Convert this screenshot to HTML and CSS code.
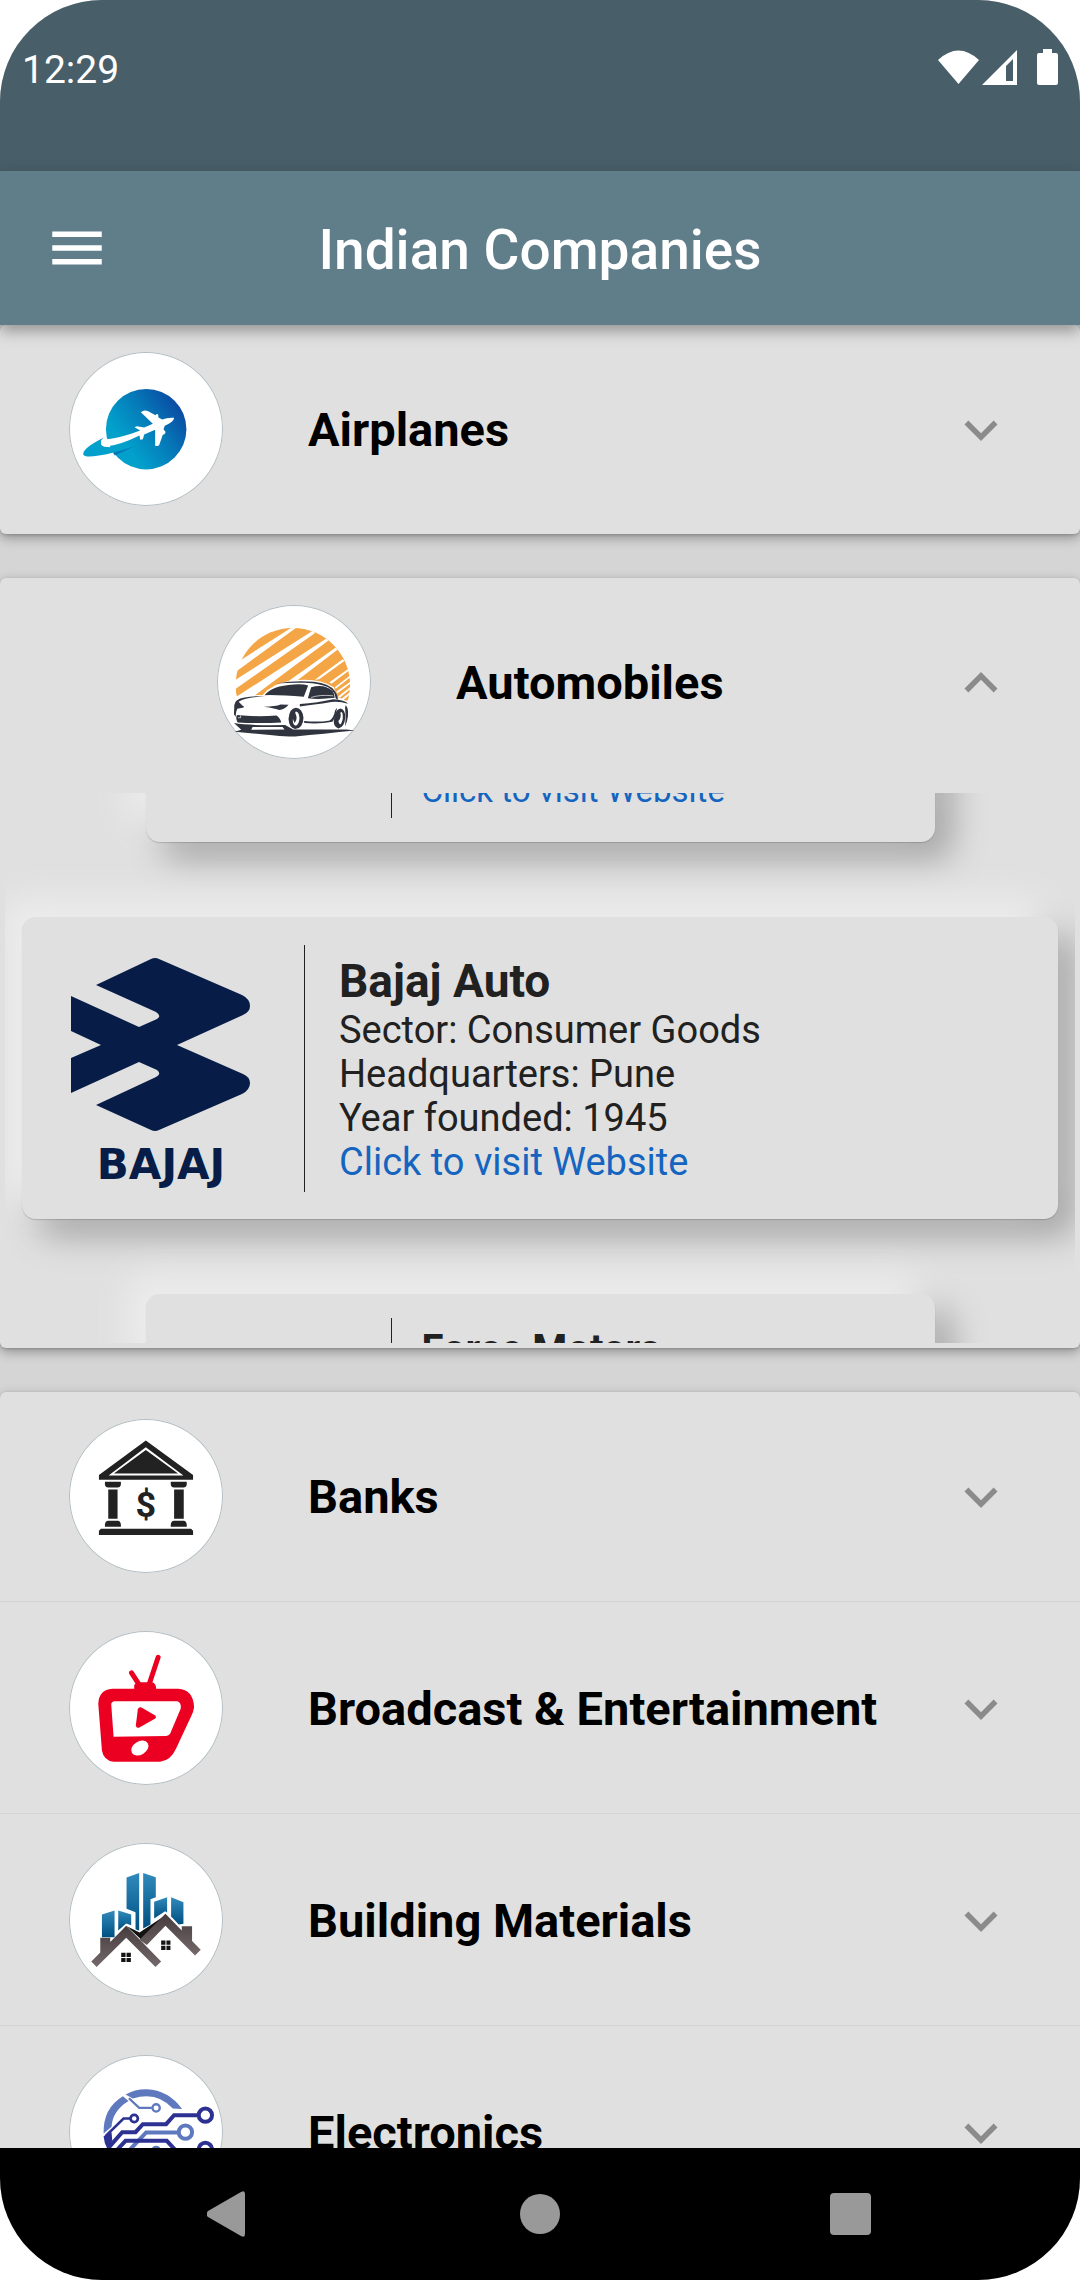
FILE: index.html
```html
<!DOCTYPE html>
<html lang="en">
<head>
<meta charset="utf-8">
<meta name="viewport" content="width=device-width, initial-scale=1">
<title>Indian Companies</title>
<link rel="stylesheet" href="styles.css">
</head>
<body>
<svg class="defs" aria-hidden="true">
  <symbol id="chevron-down" viewBox="0 0 24 24"><path fill="currentColor" d="M16.59 8.59L12 13.17 7.41 8.59 6 10l6 6 6-6z"/></symbol>
  <symbol id="chevron-up" viewBox="0 0 24 24"><path fill="currentColor" d="M12 8l-6 6 1.41 1.41L12 10.83l4.59 4.58L18 14z"/></symbol>
</svg>
<div class="phone">
  <div class="status-bar">
    <span class="clock">12:29</span>
    <svg class="status-icons" viewBox="0 0 120 36" aria-hidden="true">
      <path fill="#fff" d="M0 11Q20.500 -8 41 11L20.500 35Z"/>
      <path fill="#fff" fill-rule="evenodd" d="M44 36L79 1V36ZM68 32H75V10L68 17Z"/>
      <path fill="#fff" d="M105 0H114V4H118Q120 4 120 6V34Q120 36 118 36H101Q99 36 99 34V6Q99 4 101 4H105Z"/>
    </svg>
  </div>

  <header class="app-bar">
    <button class="menu" type="button" aria-label="Open menu">
      <svg viewBox="0 0 24 24"><path fill="#fff" d="M3 18h18v-2H3v2zm0-5h18v-2H3v2zm0-7v2h18V6H3z"/></svg>
    </button>
    <h1>Indian Companies</h1>
  </header>

  <main class="content">
    <section class="panel">
      <button class="row" type="button" aria-expanded="false">
        <svg class="avatar" viewBox="86 66 463 463" aria-hidden="true">
          <defs><linearGradient id="sky" x1="0.250" y1="0.700" x2="0.950" y2="0.200"><stop offset="0" stop-color="#02a0cb"/><stop offset="0.500" stop-color="#0579b8"/><stop offset="1" stop-color="#0b47a1"/></linearGradient></defs>
          <circle cx="318" cy="298" r="121" fill="url(#sky)"/>
          <path fill="#fff" d="M190 324Q178 340 186 350L150 382L215 372Q260 360 300 344L200 380L160 400L120 380Z"/>
          <path fill="#02a0cb" d="M196 321Q124 356 129 375Q136 388 218 369Q262 358 290 345L225 352Q180 354 182 338Q184 326 196 321Z"/>
          <path fill="#0579b8" d="M218 369Q262 358 290 345Q255 364 224 377Z"/>
          <path fill="#fff" d="M184 330Q240 326 300 302L283 292L290 289L312 293L338 282L302 247Q312 238 324 244L346 256Q350 250 354 254L355 263L366 269Q384 262 402 264Q402 276 374 288L370 298L376 306Q376 314 368 315L357 346Q350 350 345 348L345 300L312 314L308 328L300 330L298 317Q240 346 194 351Q176 348 184 330Z"/>
        </svg>
        <span class="label">Airplanes</span>
        <svg class="chevron"><use href="#chevron-down"/></svg>
      </button>
    </section>

    <section class="panel">
      <button class="row row-open" type="button" aria-expanded="true">
        <svg class="avatar" viewBox="81 75 463 463" aria-hidden="true">
          <defs><clipPath id="sun"><rect x="130" y="140" width="360" height="222"/></clipPath></defs>
          <g clip-path="url(#sun)">
            <circle cx="309" cy="316" r="172" fill="#f4a545"/>
            <path fill="#fff" d="M120 265L158 237L302 145L318 144L144 271L120 290ZM130 304L368 153L376 159L130 332ZM130 357L410 176L416 182L195 346L170 364H130ZM290 308L438 203L444 209L325 300ZM375 300L459 238L464 243L388 298ZM418 308L474 268L478 272L426 311ZM435 322L482 286V292L438 327ZM440 335L484 304V310L442 341ZM445 350L484 320V326L450 354ZM452 360L484 334V340L458 364Z"/>
          </g>
          <path fill="#fff" d="M132 362Q160 344 218 346Q246 310 305 302Q385 292 432 322L444 352Q470 358 474 376V420L460 452H150L134 420Z"/>
          <g fill="#30343f">
            <path d="M224 346Q246 318 312 314Q340 312 355 317L342 351Q275 345 224 346Z"/>
            <path d="M364 322Q404 312 428 333Q434 342 435 354Q385 360 354 355Z"/>
            <path d="M258 311Q320 300 372 306Q420 312 436 334Q446 350 444 360L438 356Q434 324 398 316Q360 308 340 309Q300 308 258 311Z"/>
            <path d="M133 376Q134 358 164 353Q190 347 226 350Q170 352 146 366L158 378Q166 382 158 384L142 387Q136 400 138 412L132 404Z"/>
            <path d="M222 381Q258 380 272 374L296 375Q284 390 268 391Q258 386 222 381Z"/>
            <path d="M141 406Q205 412 260 407Q272 416 274 428Q210 432 143 428Q136 416 141 406Z"/>
            <path d="M330 373Q385 368 430 358Q466 360 475 372Q448 364 425 367Q370 376 330 380Z"/>
            <path fill-rule="evenodd" d="M296 418Q298 386 318 384Q338 386 341 414Q340 446 316 448Q298 446 296 418ZM309 417Q308 436 318 438Q328 434 329 415Q328 396 318 395Q314 398 318 404Q324 418 314 430Z"/>
            <path fill-rule="evenodd" d="M432 424Q434 390 452 386Q466 388 467 412Q464 444 446 446Q432 442 432 424ZM446 424Q448 438 454 432Q462 418 458 400Q454 394 452 400Q456 414 446 424Z"/>
            <path d="M468 376Q480 390 472 424L466 440Q470 410 466 384ZM342 424Q390 428 420 422Q432 414 436 392L442 384Q438 412 428 426Q390 434 344 430Z"/>
            <path d="M132 430Q180 438 286 436L310 449H430L470 449L496 452Q400 462 316 470Q280 472 240 466L134 456L154 450Z"/>
          </g>
          <path fill="#fff" d="M188 442H278L284 449L184 450ZM342 438Q390 436 424 438L432 444H338Z"/>
          <path stroke="#fff" stroke-width="2" d="M144 414H152V407M364 353Q390 344 430 348" fill="none"/>
        </svg>
        <span class="label">Automobiles</span>
        <svg class="chevron"><use href="#chevron-up"/></svg>
      </button>

      <div class="wheel">
        <article class="company company-far company-prev">
          <div class="details"><a href="#website">Click to visit Website</a></div>
        </article>
        <article class="company">
          <svg class="logo" viewBox="0 0 179 221" role="img" aria-label="Bajaj">
            <path fill="#071d48" d="M80 1Q84 -1 88 1L171 37Q179 41 179 48Q179 54 172 57L106 87L172 116Q179 119 179 125Q179 132 171 136L88 172Q84 174 80 172L25 147L85 119Q91 116 86 112L68 104L0 135V100L30 87L0 73V38L68 69L86 61Q91 58 85 54L25 27Z"/>
            <text x="90" y="221" text-anchor="middle">BAJAJ</text>
          </svg>
          <div class="details">
            <h2>Bajaj Auto</h2>
            <p>Sector: Consumer Goods</p>
            <p>Headquarters: Pune</p>
            <p>Year founded: 1945</p>
            <a href="#website">Click to visit Website</a>
          </div>
        </article>
        <article class="company company-far company-next">
          <div class="details"><h2>Force Motors</h2></div>
        </article>
      </div>
    </section>

    <section class="panel">
      <button class="row" type="button" aria-expanded="false">
        <svg class="avatar" viewBox="86 87 463 463" aria-hidden="true">
          <g fill="#222">
            <path fill-rule="evenodd" d="M317 152L459 255V270H176V255ZM317 172L205 257H430Z"/>
            <path d="M317 180L414 251H221Z"/>
            <path d="M194 276H242V284Q241 293 232 293H204Q195 293 194 284ZM204 299H232V387H204ZM204 393H232Q241 394 242 404V411H194V404Q195 394 204 393Z"/>
            <path d="M392 276H440V284Q439 293 430 293H402Q393 293 392 284ZM402 299H431V387H402ZM402 393H430Q439 394 440 404V411H392V404Q393 394 402 393Z"/>
            <path d="M182 417H453L459 423V436H176V423Z"/>
          </g>
          <text class="dollar" x="317" y="383" text-anchor="middle">$</text>
        </svg>
        <span class="label">Banks</span>
        <svg class="chevron"><use href="#chevron-down"/></svg>
      </button>
      <button class="row" type="button" aria-expanded="false">
        <svg class="avatar" viewBox="86 93 463 463" aria-hidden="true">
          <g fill="#eb0022">
            <path fill-rule="evenodd" d="M216 267H282V256Q286 248 298 247H336Q348 250 348 267H414Q460 270 462 322Q460 336 454 348L408 446Q392 482 360 486H220Q190 482 185 452L174 312Q176 270 216 267ZM222 304Q213 306 213 314L220 411L378 409Q386 408 390 402L422 326Q424 308 412 304Z"/>
            <path d="M293 328Q296 320 304 323L344 346Q351 352 344 357L299 382Q288 387 287 376Z"/>
          </g>
          <path d="M274 219L294 250M354 172L328 250" stroke="#eb0022" stroke-width="15" stroke-linecap="round"/>
          <ellipse cx="299" cy="445" rx="28" ry="20" transform="rotate(-32 299 445)" fill="#fff"/>
        </svg>
        <span class="label">Broadcast &amp; Entertainment</span>
        <svg class="chevron"><use href="#chevron-down"/></svg>
      </button>
      <button class="row" type="button" aria-expanded="false">
        <svg class="avatar" viewBox="86 83 463 463" aria-hidden="true">
          <defs>
            <linearGradient id="tower" x1="0" y1="0" x2="0" y2="1"><stop offset="0" stop-color="#318abb"/><stop offset="1" stop-color="#004f82"/></linearGradient>
            <linearGradient id="roof" x1="0" y1="0" x2="0" y2="1"><stop offset="0" stop-color="#463b3c"/><stop offset="1" stop-color="#756a6b"/></linearGradient>
          </defs>
          <g fill="url(#tower)">
            <path d="M259 187L297 173V347L286 342V291L259 281Z"/>
            <path d="M309 173L347 186V246L331 252V328L309 340Z"/>
            <path d="M342 260L381 246V292L375 288L342 310Z"/>
            <path d="M393 246L430 261V326L416 328L393 304Z"/>
            <path d="M185 298L223 286V366H185Z"/>
            <path d="M234 286L273 298V330L258 325L234 346Z"/>
          </g>
          <path fill="#131313" d="M260 333L298 352L376 300L310 380Z"/>
          <g fill="url(#roof)">
            <path d="M153 439L180 412V368H210V381L258 332L363 439L346 456L258 368L169 456Z"/>
            <path d="M298 374L376 296L425 346V333H456V378L482 404L465 421L376 332L320 390Z"/>
          </g>
          <path fill="#131313" d="M243 413H256V426H243ZM259 413H272V426H259ZM243 429H256V441H243ZM259 429H272V441H259ZM363 376H376V389H363ZM379 376H391V389H379ZM363 392H376V405H363ZM379 392H391V405H379Z"/>
        </svg>
        <span class="label">Building Materials</span>
        <svg class="chevron"><use href="#chevron-down"/></svg>
      </button>
      <button class="row" type="button" aria-expanded="false">
        <svg class="avatar" viewBox="86 102 463 463" aria-hidden="true">
          <g fill="#5f79bf">
            <path d="M256 221Q286 204 320 205Q385 208 426 264L398 263Q350 210 278 233Z"/>
            <path d="M248 226L265 240Q216 270 214 318L190 338Q188 262 248 226Z"/>
          </g>
          <g fill="none" stroke="#5f79bf" stroke-width="7">
            <path d="M266 232L297 261H335"/><circle cx="348" cy="261" r="11"/>
            <path stroke-width="12" d="M262 394L318 335H412"/><circle cx="436" cy="334" r="20" stroke-width="12"/>
            <circle cx="348" cy="389" r="11"/>
          </g>
          <g fill="none" stroke="#2c3192" stroke-width="8">
            <path d="M196 346L250 293H270"/><circle cx="282" cy="293" r="11"/>
            <path stroke-width="12" d="M204 382L246 334H286L308 310H378L402 283H472"/><circle cx="496" cy="283" r="20" stroke-width="12"/>
            <path stroke-width="12" d="M230 388L256 360H380L406 388H472"/><circle cx="496" cy="386" r="20" stroke-width="12"/>
          </g>
          <path fill="#2c3192" d="M190 346L214 334L216 358L204 388Q192 370 190 346Z"/>
        </svg>
        <span class="label">Electronics</span>
        <svg class="chevron"><use href="#chevron-down"/></svg>
      </button>
    </section>
  </main>

  <nav class="nav-bar" aria-label="System">
    <button type="button" aria-label="Back"><svg viewBox="0 0 44 46"><path fill="#999" d="M1 20L34 1Q38 -1 38 3V43Q38 47 34 45L1 26Q-2 23 1 20Z"/></svg></button>
    <button type="button" aria-label="Home"><svg viewBox="0 0 44 46"><circle cx="22" cy="23" r="20" fill="#999"/></svg></button>
    <button type="button" aria-label="Recent apps"><svg viewBox="0 0 44 46"><rect x="1" y="2" width="41" height="42" rx="4" fill="#999"/></svg></button>
  </nav>
</div>
</body>
</html>
```
FILE: styles.css
```css
* { box-sizing: border-box; }

body {
  margin: 0;
  background: #fff;
  font-family: Roboto, "Noto Sans", sans-serif;
  color: #212121;
}

h1, h2, p { margin: 0; }

button {
  border: 0;
  padding: 0;
  background: none;
  font: inherit;
  color: inherit;
}

a { color: #1565c0; text-decoration: none; }

.defs { display: none; }

.phone {
  display: flex;
  flex-direction: column;
  height: 100vh;
  overflow: hidden;
  border-radius: 102px;
  background: #d5d5d5;
}

.status-bar {
  display: flex;
  flex: none;
  justify-content: space-between;
  align-items: flex-start;
  height: 171px;
  padding: 47px 22px 0;
  background: #485e68;
  color: #fff;
}

.clock { font-size: 39px; line-height: 46px; }

.status-icons { width: 120px; height: 36px; margin-top: 2px; }

.app-bar {
  position: relative;
  z-index: 1;
  display: grid;
  grid-template-columns: 66px 1fr 66px;
  flex: none;
  align-items: center;
  height: 154px;
  padding: 0 44px;
  background: #607d8a;
  color: #fff;
  box-shadow: 0 6px 14px rgba(0, 0, 0, 0.34);
}

.menu { height: 66px; }
.menu svg { display: block; width: 66px; height: 66px; }

.app-bar h1 {
  padding-top: 4px;
  font-size: 55px;
  font-weight: 500;
  line-height: 64px;
  text-align: center;
}

.content {
  display: flex;
  flex: 1;
  flex-direction: column;
  gap: 44px;
  min-height: 0;
  overflow: hidden;
}

.panel {
  flex: none;
  border-radius: 6px;
  background: #e0e0e0;
  box-shadow: 0 4px 12px rgba(0, 0, 0, 0.32), 0 1px 3px rgba(0, 0, 0, 0.16);
}

.row {
  display: flex;
  align-items: center;
  width: 100%;
  padding: 27px 66px 28px 69px;
  text-align: left;
}

.row + .row {
  border-top: 1px solid #d4d4d4;
  padding-top: 29px;
}

.row-open { padding-left: 217px; }

.avatar {
  flex: none;
  width: 154px;
  height: 154px;
  margin-right: 85px;
  border-radius: 50%;
  background: #fff;
  box-shadow: inset 0 0 0 1px #b4bec3;
}

.dollar { font-size: 108px; font-weight: 700; fill: #222; }

.label {
  flex: 1;
  padding-top: 2px;
  font-size: 47px;
  font-weight: 700;
  line-height: 56px;
  color: #000;
}

.chevron { flex: none; width: 66px; height: 66px; margin-top: 2px; color: #8b8b8b; }

.wheel {
  display: flex;
  flex-direction: column;
  align-items: center;
  justify-content: center;
  gap: 75px;
  height: 550px;
  margin: 6px 5px 0;
  overflow: hidden;
}

.panel:has(.wheel) { padding-bottom: 5px; }

.company {
  display: flex;
  flex: none;
  align-items: center;
  width: calc(100% - 34px);
  min-height: 302px;
  padding: 28px 0 27px 49px;
  border-radius: 14px;
  background: #e0e0e0;
  box-shadow: 0 1px 1px rgba(0, 0, 0, 0.16), -17px -17px 34px #eee, 17px 17px 34px #a4a4a4;
}

.logo { flex: none; width: 179px; height: 221px; margin-right: 54px; overflow: visible; }

.logo text {
  font-family: "DejaVu Sans", sans-serif;
  font-size: 42px;
  font-weight: 700;
  fill: #071d48;
}

.details {
  display: flex;
  flex-direction: column;
  align-items: flex-start;
  justify-content: center;
  align-self: stretch;
  border-left: 1px solid #212121;
  padding-left: 34px;
  font-size: 38px;
  line-height: 44px;
}

.details h2 { font-size: 46px; font-weight: 700; line-height: 54px; }

.company-far {
  width: calc(100% - 281px);
  height: 262px;
  min-height: 0;
  padding: 24px 0 24px 245px;
}

.company-far .details { padding: 8px 0 8px 30px; font-size: 33px; line-height: 38px; }
.details h2:only-child { font-size: 40px; line-height: 47px; }
.company-prev .details { justify-content: flex-end; }
.company-next .details { justify-content: flex-start; }

.nav-bar {
  display: flex;
  flex: none;
  align-items: center;
  justify-content: space-between;
  height: 132px;
  padding: 0 207px;
  background: #000;
}

.nav-bar svg { display: block; width: 44px; height: 46px; }
```
